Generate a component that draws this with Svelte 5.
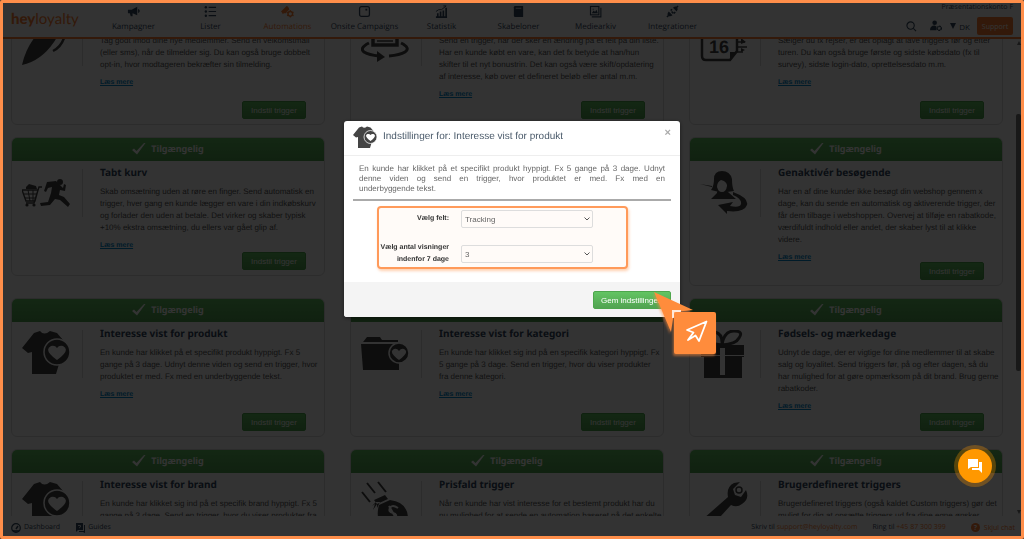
<script>
    import { onMount } from 'svelte';

    let mainElement;
    let field = 'Tracking';
    let views = '3';

    const navItems = [
        { label: 'Kampagner', icon: 'horn' },
        { label: 'Lister', icon: 'list' },
        { label: 'Automations', icon: 'auto', active: true },
        { label: 'Onsite Campaigns', icon: 'onsite' },
        { label: 'Statistik', icon: 'chart' },
        { label: 'Skabeloner', icon: 'template' },
        { label: 'Mediearkiv', icon: 'media' },
        { label: 'Integrationer', icon: 'plug' }
    ];

    const triggers = [
        { title: '', icon: 'rocket', text: 'Tag godt imod dine nye medlemmer. Send en velkomstmail (eller sms), når de tilmelder sig. Du kan også bruge dobbelt opt-in, hvor modtageren bekræfter sin tilmelding.' },
        { title: '', icon: 'rotate', text: 'Send en trigger, når der sker en ændring på et felt på din liste. Har en kunde købt en vare, kan det fx betyde at han/hun skifter til et nyt bonustrin. Det kan også være skift/opdatering af interesse, køb over et defineret beløb eller antal m.m.' },
        { title: '', icon: 'calendar', text: 'Sælger du fx rejser, er det oplagt at lave triggers før og efter turen. Du kan også bruge første og sidste købsdato (fx til survey), sidste login-dato, oprettelsesdato m.m.' },
        { title: 'Tabt kurv', icon: 'cart', text: 'Skab omsætning uden at røre en finger. Send automatisk en trigger, hver gang en kunde lægger en vare i din indkøbskurv og forlader den uden at betale. Det virker og skaber typisk +10% ekstra omsætning, du ellers var gået glip af.' },
        { title: '', icon: 'folder', text: '' },
        { title: 'Genaktivér besøgende', icon: 'woman', text: 'Har en af dine kunder ikke besøgt din webshop gennem x dage, kan du sende en automatisk og aktiverende trigger, der får dem tilbage i webshoppen. Overvej at tilføje en rabatkode, værdifuldt indhold eller andet, der skaber lyst til at klikke videre.' },
        { title: 'Interesse vist for produkt', icon: 'shirt', text: 'En kunde har klikket på et specifikt produkt hyppigt. Fx 5 gange på 3 dage. Udnyt denne viden og send en trigger, hvor produktet er med. Fx med en underbyggende tekst.' },
        { title: 'Interesse vist for kategori', icon: 'folder', text: 'En kunde har klikket sig ind på en specifik kategori hyppigt. Fx 5 gange på 3 dage. Send en trigger, hvor du viser produkter fra denne kategori.' },
        { title: 'Fødsels- og mærkedage', icon: 'gift', text: 'Udnyt de dage, der er vigtige for dine medlemmer til at skabe salg og loyalitet. Send triggers før, på og efter dagen, så du har mulighed for at gøre opmærksom på dit brand. Brug gerne rabatkoder.' },
        { title: 'Interesse vist for brand', icon: 'shirt', text: 'En kunde har klikket sig ind på et specifik brand hyppigt. Fx 5 gange på 3 dage. Send en trigger, hvor du viser produkter fra' },
        { title: 'Prisfald trigger', icon: 'money', text: 'Når en kunde har vist interesse for et bestemt produkt har du nu mulighed for at sende en automation baseret på det enkelte' },
        { title: 'Brugerdefineret triggers', icon: 'wrench', text: 'Brugerdefineret triggers (også kaldet Custom triggers) gør det muligt for dig at opsætte triggers ud fra dine egne ønsker.' }
    ];

    // the list opens scrolled down to the available triggers
    onMount(() => {
        mainElement.scrollTop = 53;
    });
</script>

{#snippet navIcon(name)}
    <svg class="nav-icon" viewBox="0 0 14 14" aria-hidden="true">
        {#if name === 'horn'}
            <path d="M1 5h4l6-3v9L6 9v3H4L3 9H1z" fill="currentColor" />
            <path d="M12 5q2 1.500 0 3" fill="none" stroke="currentColor" stroke-width="1.500" />
        {:else if name === 'list'}
            <path d="M5 2.500h8M5 7h8M5 11.500h8" stroke="currentColor" stroke-width="1.200" />
            <circle cx="2" cy="2.500" r="1.300" fill="currentColor" />
            <circle cx="2" cy="7" r="1.300" fill="currentColor" />
            <circle cx="2" cy="11.500" r="1.300" fill="currentColor" />
        {:else if name === 'auto'}
            <path d="M0 7l6-6q2 0 3 4-3 1-3.500 4H3L2 10 1 8z" fill="currentColor" />
            <circle cx="10" cy="9.500" r="2.500" fill="none" stroke="currentColor" stroke-width="1.600" />
            <path d="M10 5.500v1.500M10 12v1.500M6.500 7.500l1.300.8M12.300 10.700l1.200.8M6.500 11.500l1.300-.8M12.300 8.300l1.200-.8" stroke="currentColor" stroke-width="1.200" />
        {:else if name === 'onsite'}
            <rect x="1.700" y="1.700" width="10.600" height="10.600" rx="2" fill="none" stroke="currentColor" stroke-width="1.400" />
            <rect x="8" y="4" width="2" height="2" fill="currentColor" />
        {:else if name === 'chart'}
            <path d="M1 13h12M3 12V9M6 12V7M9 12V6M12 12V3" stroke="currentColor" stroke-width="1.800" />
            <path d="M1 7l3-2 3 0 5-4M9 1h3" fill="none" stroke="currentColor" />
        {:else if name === 'template'}
            <path d="M3.500 1H12v12H3.500Q2 13 2 11.500v-9Q2 1 3.500 1z" fill="currentColor" />
            <path d="M4 3.500h6" stroke="#fff" stroke-width=".8" />
        {:else if name === 'media'}
            <rect x="1.600" y="1.600" width="9" height="9" fill="none" stroke="currentColor" stroke-width="1.200" />
            <path d="M3 9l2-3 1.500 1.500L8 5l1.500 4zM4 4h1v1H4z" fill="currentColor" />
            <path d="M12.800 3v9.800H3" fill="none" stroke="currentColor" stroke-width="1.200" />
        {:else if name === 'plug'}
            <path d="M1 13l2-2M11 3l2-2M6 7l2 2M5 6l1.500-1.500M8.500 9l1.500-1.500" stroke="currentColor" stroke-width="1.600" />
            <path d="M3 7l4 4q-2.500 2-4.500.5T3 7zM7.500 3l4 4Q13.500 4.500 12 2.500T7.500 3z" fill="currentColor" />
        {/if}
    </svg>
{/snippet}

{#snippet triggerIcon(name)}
    <svg class="trigger-icon" viewBox="0 0 48 48" aria-hidden="true">
        {#if name === 'rocket'}
            <path d="M0 47Q4 28 18 13L40 2Q40 12 32 24 19 43 0 47z" />
            <path d="M31 33q8-4 11-13" fill="none" stroke="#444" stroke-width="2.500" />
        {:else if name === 'rotate'}
            <path d="M12 2h24v25H12z" fill="none" stroke="#444" stroke-width="3.500" />
            <path d="M16 19h16M16 23h16" stroke="#444" stroke-width="1.500" />
            <path d="M8 25Q-2 30 3 34q5 3 15 4M40 25q10 5 4 9-5 3-16 4" fill="none" stroke="#444" stroke-width="3" />
            <path d="M16 33l8 6-8 5z" />
        {:else if name === 'calendar'}
            <path d="M37 33V3H2v35q0 4 4 4h24z" fill="none" stroke="#444" stroke-width="2.500" />
            <path d="M30 42v-8h7zM41 20l5 4-5 2zM41 30l4 2-4 2z" />
            <path d="M37 24h8M37 29h10M37 34h6" stroke="#444" stroke-width="1.500" />
            <text x="9" y="35" font-family="Liberation Sans Narrow, Liberation Sans" font-size="18" font-weight="700">16</text>
        {:else if name === 'cart'}
            <path d="M0 21h16l-3 11H4zM20 18h-3l-5 16H4" fill="none" stroke="#444" stroke-width="1.400" />
            <path d="M2 25h13M3 29h11M6 21l2 11M11 21v11" stroke="#444" />
            <path d="M4 18l3-3 7 2 1 3H4z" />
            <circle cx="5" cy="36" r="1.600" /><circle cx="12" cy="36" r="1.600" />
            <circle cx="38" cy="13" r="3" />
            <path d="M25 13l9-1 4 4 3 3 1-4 2 1-1 6-5-1-1 5 5 2 6 7-2 3-8-7-5-1-5 6-9 1-1-3 8-1 3-9 1-6-4 1-2 4-2-1z" />
        {:else if name === 'woman'}
            <path d="M11 21q3-4 3-11Q14 2 22 2t10 8q0 8 2 12l-7 1v-7q-1-4-6-5-4 2-4 7l2 5zM17 18q1 5 5 5t5-6l1 6 8 7H11l6-6zM0 15l12 2v1z" />
            <path d="M33 23q16 6 14 13-3 8-20 6v3L18 36l15-3-3 4q10 2 11-2 1-5-8-9z" />
        {:else if name === 'shirt'}
            <path d="M12 3l6-2q4 5 10 0l7 2 6 7v11L34 44H10V22l-4 1-6-5z" />
            <circle cx="35" cy="22" r="13" stroke="#fff" stroke-width="1.500" />
            <path d="M35 30q-14-10-6-14 4-1 6 2 2-3 6-2 8 4-6 14z" fill="#fff" />
        {:else if name === 'folder'}
            <path d="M2 12l4-5h13l2 3h16v2zM0 14h38v26H2z" />
            <circle cx="38" cy="23" r="10" stroke="#fff" stroke-width="1.500" />
            <path d="M38 30q-11-8-5-11 3-1 5 2 2-3 5-2 6 3-5 11z" fill="#fff" />
        {:else if name === 'gift'}
            <path d="M1 15h43v12H1zM4 27h38v21H4z" />
            <path d="M22 15Q9 14 8 7t7-5 7 13Q24 1 34 1t5 7q-3 6-17 7" fill="none" stroke="#444" stroke-width="3" />
            <path d="M20 18h5v27h-5zM1 25h43v1H1z" fill="#fff" />
        {:else if name === 'money'}
            <path d="M1 11l8 10M6 2l8 10M17 1l8 10" stroke="#444" stroke-width="2" />
            <path d="M13 19l11-5 3 4-11 5zM18 24l11-5q18 2 18 19 0 11-13 11-22-3-16-25zM15 21l-4 4 3-2-2 6 4-6v4l3-6z" />
            <path d="M37 27q-6-4-8 0t3 5 2 5-8 0M28 25l8 14" fill="none" stroke="#fff" stroke-width="2" />
        {:else if name === 'wrench'}
            <path d="M3 38l25-22Q26 6 34 2l6-1-7 7 2 6 6 2 5-7q4 9-4 14-5 4-11 1L10 47q-6 3-9-1z" />
            <circle cx="39" cy="9" r="3" fill="none" stroke="#444" stroke-width="1.500" />
        {/if}
    </svg>
{/snippet}

<div class="page">
    <header class="topbar">
        <a class="logo" href="#home"><b>hey</b>loyalty</a>
        <nav>
            {#each navItems as item}
                <a href="#{item.icon}" class:active={item.active}>
                    {@render navIcon(item.icon)}
                    <span>{item.label}</span>
                </a>
            {/each}
        </nav>
        <div class="account">
            <span class="account-name">Præsentationskonto F</span>
            <div class="tools">
                <button class="plain" aria-label="Søg">
                    <svg width="11" height="11" viewBox="0 0 12 12"><circle cx="5" cy="5" r="4" fill="none" stroke="currentColor" stroke-width="1.200" /><path d="M8 8l3 3" stroke="currentColor" stroke-width="1.200" /></svg>
                </button>
                <button class="plain" aria-label="Konto">
                    <svg width="13" height="12" viewBox="0 0 14 13"><circle cx="5" cy="3" r="2.500" fill="currentColor" /><path d="M0 11q0-5 5-5l2 1v4z" fill="currentColor" /><circle cx="10" cy="9" r="2.200" fill="none" stroke="currentColor" stroke-width="1.600" stroke-dasharray="1.800 .5" /></svg>
                </button>
                <button class="plain lang">
                    <svg width="6" height="6" viewBox="0 0 6 6" aria-hidden="true"><path d="M0 0h6L3 6z" fill="currentColor" /></svg>
                    DK
                </button>
                <button class="support">Support</button>
            </div>
        </div>
    </header>

    <div class="content">
        <main bind:this={mainElement}>
            {#each triggers as trigger}
                <article class="card">
                    <div class="card-head">
                        <svg width="14" height="12" viewBox="0 0 14 12" aria-hidden="true"><path d="M0 7l2-1.500L4.500 8 12 0h1.500L5 11.500z" fill="#fff" /></svg>
                        <span>Tilgængelig</span>
                    </div>
                    <div class="card-body">
                        <div class="icon-box">{@render triggerIcon(trigger.icon)}</div>
                        <div class="card-text">
                            <h2>{trigger.title}</h2>
                            <p>{trigger.text}</p>
                            <a href="#more">Læs mere</a>
                            <button class="green">Indstil trigger</button>
                        </div>
                    </div>
                </article>
            {/each}
        </main>
        <div class="scrollbar" aria-hidden="true">
            <svg viewBox="0 0 4 4"><path d="M2 0l2 4H0z" /></svg>
            <div class="track"><div class="thumb"></div></div>
            <svg viewBox="0 0 4 4"><path d="M0 0h4L2 4z" /></svg>
        </div>
    </div>

    <footer class="bottombar">
        <a href="#dashboard">
            <svg width="10" height="10" viewBox="0 0 10 10" aria-hidden="true"><circle cx="5" cy="5" r="4.300" fill="none" stroke="currentColor" stroke-width="1.200" /><path d="M2 8h6M5 6l2-3" stroke="currentColor" stroke-width="1.500" /></svg>
            Dashboard
        </a>
        <a href="#guides">
            <svg width="10" height="10" viewBox="0 0 10 10" aria-hidden="true"><path d="M1 0h7v7H3L1 9zM9 2h1v8L8 9H4V8h5z" fill="currentColor" /><path d="M3 2.500h2.500V4L4 5" fill="none" stroke="#fff" stroke-width=".8" /></svg>
            Guides
        </a>
        <span class="contact">Skriv til <a href="mailto:support@heyloyalty.com">support@heyloyalty.com</a></span>
        <span>Ring til <a href="tel:+4587300399">+45 87 300 399</a></span>
        <button class="hide-chat"><span class="question">?</span>Skjul chat</button>
    </footer>
</div>

<div class="backdrop">
    <div class="modal" role="dialog" aria-modal="true" aria-labelledby="modal-title">
        <div class="modal-head">
            {@render triggerIcon('shirt')}
            <h1 id="modal-title">Indstillinger for: Interesse vist for produkt</h1>
            <button class="close" aria-label="Luk">×</button>
        </div>
        <div class="modal-body">
            <p>
                <span class="spread">En kunde har klikket på et specifikt produkt hyppigt. Fx 5 gange på 3 dage. Udnyt denne viden og send en trigger, hvor produktet er med. Fx med en</span>
                underbyggende tekst.
            </p>
            <hr />
            <form class="fields">
                <label for="field">Vælg felt:</label>
                <div class="select">
                    <select id="field" bind:value={field}>
                        <option>Tracking</option>
                    </select>
                    <svg viewBox="0 0 6 4" aria-hidden="true"><path d="M.5.500L3 3 5.500.5" /></svg>
                </div>
                <label for="views">Vælg antal visninger indenfor 7 dage</label>
                <div class="select">
                    <select id="views" bind:value={views}>
                        <option>3</option>
                    </select>
                    <svg viewBox="0 0 6 4" aria-hidden="true"><path d="M.5.500L3 3 5.500.5" /></svg>
                </div>
            </form>
        </div>
        <div class="modal-foot">
            <div class="save">
                <button class="green">Gem indstillinger</button>
                <svg class="pointer" viewBox="0 0 66 66" aria-hidden="true">
                    <path d="M4 1l39 18-19 2-3 20z" fill="#ff8c3c" />
                    <path d="M23 27v-7h8" fill="none" stroke="#fff" stroke-opacity=".8" stroke-width="2" />
                    <rect x="24" y="21" width="42" height="42" rx="2" fill="#ff8c3c" />
                    <path d="M56.500 30.500L37 39l6.500 2.500L38 49l7.500-4.500L49 50z" fill="none" stroke="#fff" stroke-width="1.800" stroke-linejoin="round" />
                </svg>
            </div>
        </div>
    </div>
</div>

<button class="chat" aria-label="Chat">
    <svg width="16" height="16" viewBox="0 0 16 16"><path d="M1 1h10v8H4l-3 2zM12 4h3v11l-3-3H5v-2h7z" fill="#fff" /></svg>
</button>
<div class="frame"></div>

<style>
    :global(body) {
        margin: 0;
        background: #fff;
        font-family: "Liberation Sans", Arial, sans-serif;
        text-rendering: geometricPrecision;
    }

    * {
        box-sizing: border-box;
    }

    button {
        font-family: inherit;
        cursor: pointer;
    }

    a {
        text-decoration: none;
    }

    .page {
        height: 100vh;
        display: flex;
        flex-direction: column;
        color: #34495e;
    }

    .topbar {
        display: flex;
        height: 39px;
        flex: none;
        padding: 0 11px;
        border-bottom: 2px solid #ff7f32;
        font-family: "Open Sans", "Noto Sans", sans-serif;
        font-size: 8px;
    }

    .logo {
        width: 84px;
        padding-top: 8px;
        color: #ff7f32;
        font-family: Lato, sans-serif;
        font-size: 15px;
        line-height: 22px;
    }

    .logo b {
        font-weight: 900;
    }

    nav {
        display: flex;
    }

    nav a {
        width: 77px;
        display: flex;
        flex-direction: column;
        align-items: center;
        gap: 3px;
        padding-top: 5px;
        line-height: 12px;
        color: #34495e;
        white-space: nowrap;
    }

    nav .active {
        color: #ff7f32;
    }

    .nav-icon {
        width: 13px;
        height: 13px;
    }

    .account {
        flex: 1;
        display: flex;
        flex-direction: column;
        align-items: flex-end;
        padding-top: 3px;
    }

    .account-name {
        font-size: 7px;
        line-height: 10px;
    }

    .tools {
        display: flex;
        align-items: center;
        gap: 7px;
        padding-top: 4px;
    }

    .plain {
        display: flex;
        align-items: center;
        padding: 0;
        border: 0;
        background: none;
        color: #34495e;
        font-size: 8px;
    }

    .plain:first-child {
        margin-right: 6px;
    }

    .lang {
        gap: 3px;
    }

    .support {
        width: 36px;
        height: 18px;
        padding: 0;
        border: 0;
        border-radius: 2px;
        background: #ff7f32;
        color: #fff;
        font-size: 7px;
    }

    .content {
        flex: 1;
        min-height: 0;
        display: flex;
    }

    main {
        flex: 1;
        display: grid;
        grid-template-columns: repeat(3, 1fr);
        grid-auto-rows: max-content;
        align-items: start;
        align-content: start;
        gap: 12px 25px;
        padding: 0 11px 20px 11px;
        overflow-y: auto;
        scrollbar-width: none;
    }

    .card {
        display: flex;
        flex-direction: column;
        min-height: 139px;
        border: 1px solid #ddd;
        border-radius: 6px;
        overflow: hidden;
    }

    .card-head {
        display: flex;
        align-items: center;
        justify-content: center;
        gap: 5px;
        height: 24px;
        margin: -1px -1px 0;
        background: linear-gradient(#62c462, #51a351);
        color: #fff;
        font: 700 9px/24px "Noto Sans", "Open Sans", sans-serif;
    }

    .card-body {
        flex: 1;
        display: flex;
    }

    .icon-box {
        flex: none;
        width: 71px;
        height: 48px;
        margin: 8px 17px 0 0;
        padding-left: 10px;
        border-right: 1px solid #ddd;
    }

    .trigger-icon {
        width: 48px;
        height: 48px;
        fill: #444;
    }

    .card-text {
        flex: 1;
        display: flex;
        flex-direction: column;
        align-items: flex-start;
        padding: 4px 1px 5px 0;
        font-size: 8px;
        line-height: 12px;
        color: #555;
    }

    h2 {
        min-height: 14px;
        margin: 0;
        color: #34495e;
        font: 700 10px/14px "Noto Sans", "Open Sans", sans-serif;
    }

    .card-text p {
        margin: 7px 0 8px;
    }

    .card-text a {
        color: #08c;
        font-size: 7px;
        font-weight: 700;
        line-height: 8px;
        text-decoration: underline;
    }

    .green {
        height: 18px;
        padding: 0 8px;
        border: 1px solid #4ca64c;
        border-radius: 2px;
        background: linear-gradient(#62c462, #51a351);
        color: #fff;
        font-size: 8px;
    }

    .card-text .green {
        width: 64px;
        margin: auto 17px 0 auto;
        padding: 0;
    }

    .scrollbar {
        width: 10px;
        display: flex;
        flex-direction: column;
        align-items: center;
        padding: 2px 3px 2px 2px;
    }

    .scrollbar svg {
        width: 4px;
        height: 4px;
        fill: #777;
    }

    .track {
        flex: 1;
        width: 100%;
        padding-top: 69px;
    }

    .thumb {
        height: 65%;
        border-radius: 2px;
        background: #777;
    }

    .bottombar {
        flex: none;
        display: flex;
        align-items: center;
        gap: 15px;
        height: 23px;
        padding: 0 9px 0 11px;
        font: 7px/10px "Open Sans", "Noto Sans", sans-serif;
    }

    .bottombar a {
        display: inline-flex;
        align-items: center;
        gap: 3px;
        color: #34495e;
    }

    .bottombar span a {
        color: #ff7f32;
    }

    .contact {
        margin-left: auto;
    }

    .hide-chat {
        display: flex;
        align-items: center;
        gap: 4px;
        margin-left: 10px;
        padding: 0;
        border: 0;
        background: none;
        color: #ff7f32;
        font-size: 7px;
    }

    .question {
        width: 9px;
        height: 9px;
        border-radius: 50%;
        background: #ff7f32;
        color: #fff;
        font-weight: 700;
        line-height: 9px;
        text-align: center;
    }

    .backdrop {
        position: fixed;
        inset: 0;
        display: flex;
        align-items: flex-start;
        justify-content: center;
        padding-top: 121px;
        background: rgba(0, 0, 0, 0.8);
    }

    .modal {
        width: 336px;
        border-radius: 3px;
        background: #fff;
        box-shadow: 0 1px 4px rgba(0, 0, 0, 0.5);
    }

    .modal-head {
        display: flex;
        align-items: flex-start;
        height: 35px;
        padding: 5px 9px;
        border-bottom: 1px solid #eee;
    }

    .modal-head .trigger-icon {
        width: 24px;
        height: 24px;
    }

    h1 {
        flex: 1;
        margin: 0 0 0 6px;
        color: #4a5a6a;
        font-size: 10px;
        font-weight: 400;
        line-height: 22px;
    }

    .close {
        padding: 0;
        border: 0;
        background: none;
        color: #aaa;
        font-size: 11px;
        font-weight: 700;
        line-height: 12px;
    }

    .modal-body {
        padding: 8px 9px 13px;
    }

    .modal-body p {
        margin: 0 6px 5px;
        color: #666;
        font-size: 8px;
        line-height: 10px;
    }

    .spread {
        display: block;
        text-align: justify;
        text-align-last: justify;
    }

    hr {
        height: 2px;
        margin: 0 0 5px;
        border: 0;
        background: #aaa;
    }

    .fields {
        display: grid;
        grid-template-columns: 70px 132px;
        align-items: center;
        gap: 14px 12px;
        width: 251px;
        margin-left: 24px;
        padding: 2px 0 1px;
        border: 2px solid #ff9a5a;
        border-radius: 4px;
        background: #fffbf8;
        box-shadow: 1px 2px 3px rgba(255, 140, 60, 0.4);
    }

    label {
        color: #333;
        font-size: 7px;
        font-weight: 700;
        line-height: 12px;
        text-align: right;
    }

    .select {
        display: grid;
        align-items: center;
    }

    .select > * {
        grid-area: 1 / 1;
    }

    .select svg {
        justify-self: end;
        width: 6px;
        margin-right: 3px;
        fill: none;
        stroke: #555;
        pointer-events: none;
    }

    select {
        width: 100%;
        height: 18px;
        padding: 0 3px;
        border: 1px solid #ddd;
        border-radius: 2px;
        background: transparent;
        color: #666;
        font: 8px "Liberation Sans", Arial, sans-serif;
        appearance: none;
    }

    .modal-foot {
        display: flex;
        justify-content: flex-end;
        padding: 9px 9px 8px;
        border-radius: 0 0 3px 3px;
        background: #f4f4f4;
    }

    .save {
        position: relative;
        display: flex;
    }

    .save .green {
        width: 78px;
        padding: 0 7px;
        text-align: left;
    }

    .pointer {
        position: absolute;
        top: 0;
        left: 57px;
        width: 66px;
        height: 66px;
        filter: drop-shadow(-1px 2px 1px rgba(255, 140, 60, 0.5));
    }

    .chat {
        position: fixed;
        right: 32px;
        bottom: 56px;
        display: flex;
        align-items: center;
        justify-content: center;
        width: 34px;
        height: 34px;
        padding: 0;
        border: 0;
        border-radius: 50%;
        background: #ff9800;
        box-shadow: 0 0 0 4px rgba(255, 152, 0, 0.3);
    }

    .frame {
        position: fixed;
        inset: 0;
        border: 3px solid #ff8e4a;
        border-radius: 2px;
        pointer-events: none;
    }
</style>
